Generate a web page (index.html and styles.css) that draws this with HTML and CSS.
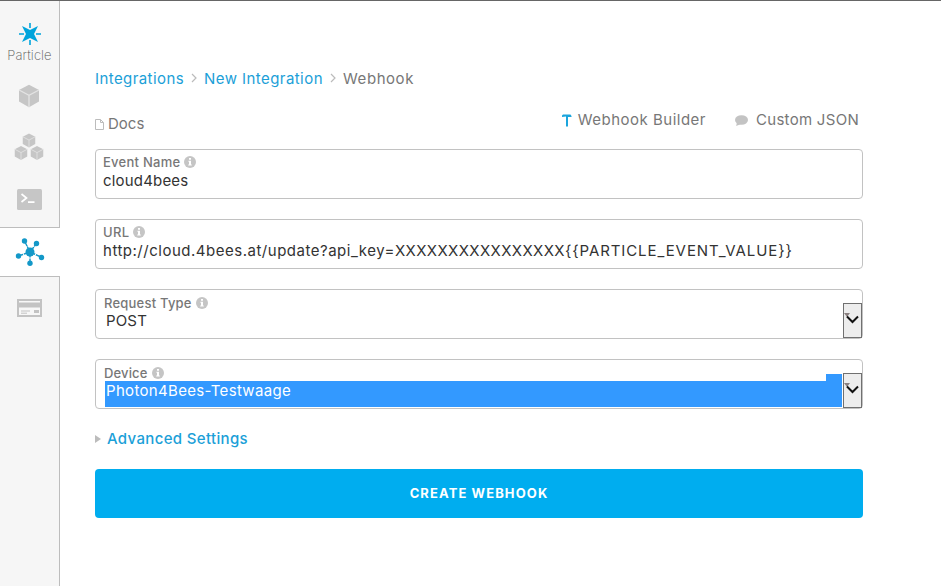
FILE: index.html
```html
<!DOCTYPE html>
<html lang="en">
<head>
<meta charset="utf-8">
<title>Webhook</title>
<link rel="stylesheet" href="styles.css">
</head>
<body>
<svg width="0" height="0" class="defs">
  <symbol id="info" viewBox="0 0 12 12"><circle cx="6" cy="6" r="6" fill="#c5c5c5"/><path d="M5 2h2v1.700H5zM4.400 4.800H7V8.600h.8v1H4.200v-1H5V5.800h-.6z" fill="#fff"/></symbol>
  <symbol id="cube" viewBox="0 0 22 24"><path d="M11 .8 21 6v11.500L11 23.200 1 17.500V6z" fill="#c6c6c6"/><path d="M1 6l10 5.300L21 6M11 11.300V23.200" fill="none" stroke="#e4e4e4" stroke-width="1.300"/></symbol>
  <symbol id="arrow" viewBox="0 0 19 35"><path d="M1 10h6L4 14z" fill="#8a8080"/><path d="M4 13.500l5.500 5.500 5.500-5.500" fill="none" stroke="#111" stroke-width="2"/></symbol>
</svg>
<div class="app">
  <nav class="sidebar">
    <div class="brand">
      <svg width="24" height="24" viewBox="0 0 24 24"><path d="M4 4l8 4 8-4-4 8 4 8-8-4-8 4 4-8z" fill="#00a4dc"/><path d="M12 1v5M12 18v5M1 12h5M18 12h5" stroke="#00a4dc" stroke-width="1.600"/></svg>
      <span>Particle</span>
    </div>
    <a class="item device"><svg width="22" height="24"><use href="#cube"/></svg></a>
    <a class="item products"><svg width="30" height="28" viewBox="0 0 30 28"><use href="#cube" x="8" y="0" width="14" height="15"/><use href="#cube" x="0" y="12.500" width="14" height="15"/><use href="#cube" x="16" y="12.500" width="14" height="15"/></svg></a>
    <a class="item console"><svg width="25" height="21" viewBox="0 0 25 21"><rect width="25" height="21" rx="1.500" fill="#c6c6c6"/><path d="M4.500 5l5 4-5 4M11 13.200h6.500" fill="none" stroke="#fff" stroke-width="1.700"/></svg></a>
    <a class="item active"><svg width="30" height="28" viewBox="0 0 30 28"><path d="M15 14L9.500 3M15 14l6.500-8.500M15 14L3.500 18M15 14l12 5.500M15 14v11.500" stroke="#1398c8" stroke-width="1.400"/><path d="M12.300 8.600l-1.700.8M18 8l2 1.500M8 15l.8 2M21 15.500l-1 2M14 20h2" stroke="#fff" stroke-width="1"/><g fill="#1398c8"><circle cx="15" cy="14" r="4.500"/><circle cx="9.500" cy="3" r="2.700"/><circle cx="21.500" cy="5.500" r="2.700"/><circle cx="3.500" cy="18" r="2.700"/><circle cx="26.500" cy="19.500" r="2.700"/><circle cx="15" cy="25.300" r="2.700"/></g></svg></a>
    <a class="item billing"><svg width="25" height="18" viewBox="0 0 25 18"><rect x="1" y="1" width="23" height="16" fill="#f7f7f7" stroke="#c3c3c3" stroke-width="2"/><path d="M1 3.500h23v5H1zM17 11h5v3h-5z" fill="#c3c3c3"/><path d="M4 12h9M4 14.200h6" stroke="#c3c3c3"/></svg></a>
  </nav>
  <main class="content">
    <div class="crumbs">
      <a class="c1">Integrations</a>
      <svg width="6" height="10" viewBox="0 0 6 10"><path d="M1 1l4 4-4 4" fill="none" stroke="#bbb" stroke-width="1.200"/></svg>
      <a class="c2">New Integration</a>
      <svg width="6" height="10" viewBox="0 0 6 10"><path d="M1 1l4 4-4 4" fill="none" stroke="#bbb" stroke-width="1.200"/></svg>
      <span class="c3">Webhook</span>
    </div>
    <div class="tools">
      <a class="docs"><svg width="9" height="11" viewBox="0 0 9 11"><path d="M.5.500h5l3 3v7h-8zM5.500.500v3h3" fill="none" stroke="#bcbcbc"/></svg><span>Docs</span></a>
      <div class="tabs">
        <a class="builder"><svg width="10" height="13" viewBox="0 0 10 13"><path d="M0 3V1.500L1 .500h7.500L9.500 2v1H6v9.500H4V2.500z" fill="#1ba5dd"/></svg><span>Webhook Builder</span></a>
        <a class="json"><svg width="13" height="11" viewBox="0 0 13 11"><ellipse cx="6.500" cy="5" rx="6.500" ry="4.800" fill="#c3c3c3"/><path d="M2 7l-.8 4L6 9z" fill="#c3c3c3"/></svg><span>Custom JSON</span></a>
      </div>
    </div>
    <div class="field">
      <label class="ev">Event Name<svg width="12" height="12"><use href="#info"/></svg></label>
      <div class="value cloud">cloud4bees</div>
    </div>
    <div class="field">
      <label class="url">URL<svg width="12" height="12"><use href="#info"/></svg></label>
      <div class="value"><span class="u1">http://cloud.4bees.at/update?api_key=</span><span class="u2">XXXXXXXXXXXXXXXX</span><span class="u3">{{PARTICLE_EVENT_VALUE}}</span></div>
    </div>
    <div class="field select">
      <label class="rt">Request Type<svg width="12" height="12"><use href="#info"/></svg></label>
      <div class="value post">POST</div>
      <span class="drop"><svg width="17" height="33" viewBox="1 1 17 33"><use href="#arrow" width="19" height="35"/></svg></span>
    </div>
    <div class="field select">
      <label class="dv">Device<svg width="12" height="12"><use href="#info"/></svg></label>
      <div class="value selected">Photon4Bees-Testwaage</div>
      <span class="drop"><svg width="17" height="33" viewBox="1 1 17 33"><use href="#arrow" width="19" height="35"/></svg></span>
    </div>
    <a class="advanced"><svg width="6" height="8" viewBox="0 0 6 8"><path d="M0 0l6 4-6 4z" fill="#bcbcbc"/></svg><span>Advanced Settings</span></a>
    <button class="create">CREATE WEBHOOK</button>
  </main>
</div>
</body>
</html>
```
FILE: styles.css
```css
* { box-sizing: border-box; }
body { margin: 0; background: #fff; font: 15px/20px Inter, "Liberation Sans", sans-serif; color: #777; }
svg { display: block; flex: none; }
.defs { position: absolute; }
.app { display: flex; height: 586px; border-top: 1px solid #666; overflow: hidden; }

.sidebar { width: 60px; flex: none; background: #f6f6f6; border-right: 1px solid #bdbdbd; display: flex; flex-direction: column; }
.brand { height: 69px; padding-top: 21px; display: flex; flex-direction: column; align-items: center; }
.brand span { font-size: 13px; line-height: 18px; font-weight: 200; letter-spacing: .1px; color: #555; }
.item { display: flex; align-items: center; justify-content: center; padding-right: 1px; }
.device { height: 52px; }
.products { height: 50px; }
.console { height: 55px; }
.active { width: 60px; height: 50px; background: #fff; border: solid #bdbdbd; border-width: 1px 0; }
.billing { height: 61px; padding-right: 0; }

.content { width: 803px; padding: 68px 0 0 35px; }
.crumbs { display: flex; align-items: center; height: 20px; }
.crumbs a { color: #1ba0d8; }
.crumbs svg { margin: -3px 7px 0; }
.c1 { width: 89px; letter-spacing: .42px; }
.c2 { width: 119px; letter-spacing: .44px; }
.c3 { letter-spacing: .56px; }
.tools { height: 60px; padding-top: 21px; display: flex; justify-content: space-between; }
.tools a { display: flex; align-items: center; height: 20px; }
.docs { margin-top: 4px; gap: 4px; }
.tabs { display: flex; gap: 29px; padding-right: 4px; }
.builder { gap: 6px; letter-spacing: .5px; }
.json { gap: 8px; letter-spacing: .29px; }

.field { position: relative; height: 50px; margin-bottom: 20px; padding: 4px 7px; border: 1px solid #c2c2c2; border-radius: 4px; }
.field label { display: flex; align-items: center; gap: 4px; height: 16px; font-size: 13px; line-height: 16px; font-weight: 500; }
.ev { letter-spacing: .26px; }
.url { letter-spacing: .3px; }
.rt { letter-spacing: .22px; }
.dv { letter-spacing: .15px; }
.value { height: 22px; line-height: 22px; color: #333; white-space: nowrap; }
.cloud { letter-spacing: .18px; }
.u1 { letter-spacing: .51px; }
.u2 { letter-spacing: .39px; }
.u3 { letter-spacing: .91px; }
.select { padding: 5px 0 0 8px; }
.post { padding-left: 2px; letter-spacing: .16px; line-height: 20px; }
.selected { position: relative; width: 737px; height: 26px; margin-left: 1px; padding-left: 1px; background: #3399ff; color: #fff; letter-spacing: .33px; line-height: 20px; }
.selected::before { content: ""; position: absolute; right: 0; top: -7px; width: 16px; height: 7px; background: #3399ff; }
.drop { position: absolute; right: 0; top: 13px; width: 19px; height: 35px; background: #ededed; border: 1px solid #707070; }

.advanced { display: flex; align-items: center; gap: 6px; height: 20px; color: #1ba0d8; font-weight: 500; letter-spacing: .34px; }
.create { display: block; width: 768px; height: 49px; margin: 20px 0 0; padding: 0; border: 0; border-radius: 4px; background: #00adef; color: #fff; font: 700 13px/49px Inter, "Liberation Sans", sans-serif; letter-spacing: 1.1px; }
```
